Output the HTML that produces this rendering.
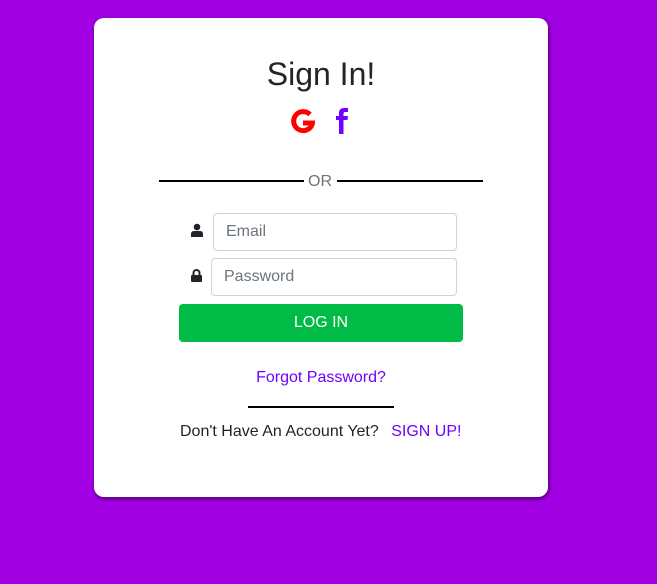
<!DOCTYPE html><html><head><style>
body{margin:0;width:657px;height:584px;background:#a000e2;font-family:"Liberation Sans",sans-serif;position:relative;overflow:hidden}
.card{position:absolute;left:94px;top:18px;width:454px;height:479px;background:#fff;border-radius:10px;box-shadow:1px 2px 4px rgba(0,0,0,.5)}
.a{position:absolute}
h1{position:absolute;left:0;width:454px;top:38px;margin:0;text-align:center;font-weight:400;font-size:32px;color:#212529}
.in{position:absolute;box-sizing:border-box;border:1px solid #ced4da;border-radius:4px;height:38px;font-size:16px;color:#6c757d;padding:9px 12px}
</style></head><body><div class="card">
<h1>Sign In!</h1>
<svg class="a" style="left:197px;top:91px" width="24" height="25" viewBox="0 0 24 25"><path d="M19 5.5A9.5 9.5 0 1 0 21.5 14H12" stroke="#f00" stroke-width="5" fill="none"/></svg>
<svg class="a" style="left:242px;top:90px" width="13" height="26" viewBox="0 0 13 26"><path d="M3 26V12H0V8H3V5Q3 0 8 0H12V4H9Q7.5 4 7.5 6V8H12L11.5 12H7.5V26Z" fill="#7000ff"/></svg>
<div class="a" style="left:65px;top:162px;width:145px;height:2px;background:#000"></div>
<div class="a" style="left:243px;top:162px;width:146px;height:2px;background:#000"></div>
<div class="a" style="left:214px;top:155px;font-size:16px;color:#6c757d">OR</div>
<svg class="a" style="left:97px;top:205px" width="12" height="14" viewBox="0 0 12 14"><circle cx="6" cy="4" r="3.3" fill="#212529"/><path d="M0 14V11Q0 8 3 8H9Q12 8 12 11V14Z" fill="#212529"/></svg>
<svg class="a" style="left:97px;top:251px" width="11" height="13" viewBox="0 0 11 13"><path d="M2.5 6V4A3 3 0 0 1 8.5 4V6" stroke="#212529" stroke-width="2" fill="none"/><rect x="0" y="6" width="11" height="7" rx="1" fill="#212529"/></svg>
<div class="in" style="left:119px;top:195px;width:244px">Email</div>
<div class="in" style="left:117px;top:240px;width:246px">Password</div>
<div class="a" style="left:85px;top:286px;width:284px;height:38px;background:#00bb45;border-radius:4px;color:#fff;font-size:16px;text-align:center;line-height:38px">LOG IN</div>
<div class="a" style="left:0;width:454px;top:351px;text-align:center;font-size:16px;color:#7000ff">Forgot Password?</div>
<div class="a" style="left:154px;top:388px;width:146px;height:2px;background:#000"></div>
<div class="a" style="left:86px;top:405px;font-size:16px;color:#212529">Don't Have An Account Yet? <span style="color:#7000ff;margin-left:8px">SIGN UP!</span></div>
</div></body></html>
